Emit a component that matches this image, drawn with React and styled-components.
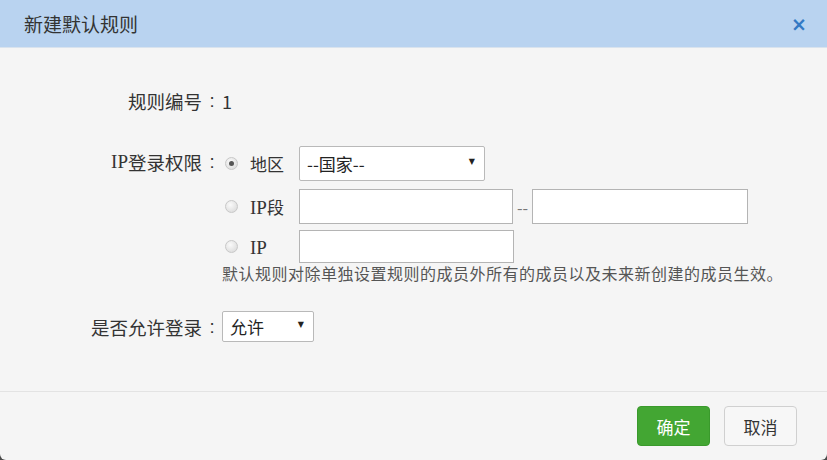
import styled, { createGlobalStyle } from 'styled-components'

const GlobalStyle = createGlobalStyle`
    html, body {
        margin: 0;
        padding: 0;
        background: #4a4a4a;
    }
    body {
        font-family: "Noto Sans CJK SC", "Liberation Sans", sans-serif;
    }
`

const Dialog = styled.div`
    width: 827px;
    height: 460px;
    display: flex;
    flex-direction: column;
    background: #f5f5f5;
    border-radius: 0 0 6px 6px;
    overflow: hidden;
    box-sizing: border-box;
`

const Header = styled.div`
    height: 48px;
    flex: none;
    display: flex;
    align-items: center;
    justify-content: space-between;
    padding: 0 20px 0 24px;
    background: #b9d3f0;
    border-bottom: 1px solid #d9e3ee;
    box-sizing: border-box;
`

const Title = styled.h3`
    margin: 0;
    font-size: 19px;
    font-weight: normal;
    color: #333;
`

const Close = styled.span`
    font-family: "DejaVu Sans", sans-serif;
    font-size: 19px;
    font-weight: bold;
    color: #3379c4;
    cursor: pointer;
`

const Body = styled.div`
    flex: 1;
    padding: 41px 0 0;
    color: #333;
    font-size: 18.5px;
`

const Row = styled.div`
    display: grid;
    grid-template-columns: 222px 1fr;
    align-items: ${p => (p.$top ? 'start' : 'center')};
    margin-bottom: ${p => p.$gap || 0}px;
`

const Label = styled.div`
    display: flex;
    justify-content: flex-end;
    align-items: center;
    line-height: ${p => p.$lh || 24}px;
    height: ${p => p.$lh || 24}px;
    white-space: nowrap;
`

const Colon = styled.span`
    display: inline-block;
    width: 20px;
    text-align: center;
    font-family: "Liberation Sans", sans-serif;
`

const Latin = styled.span`
    font-family: "Liberation Serif", serif;
    font-size: 19px;
`

const Value = styled.div`
    line-height: 24px;
    font-size: 18px;
`

const Options = styled.div`
    display: flex;
    flex-direction: column;
`

const Option = styled.label`
    display: flex;
    align-items: center;
    margin-bottom: ${p => p.$gap || 0}px;
`

const Radio = styled.span`
    width: 13px;
    height: 13px;
    margin: 0 12px 0 3px;
    border-radius: 50%;
    border: 1px solid #c8c8c8;
    box-sizing: border-box;
    background: radial-gradient(circle at 40% 35%, #fafafa, #d6d6d6);
    display: flex;
    align-items: center;
    justify-content: center;

    &::after {
        content: '';
        width: 5px;
        height: 5px;
        border-radius: 50%;
        background: ${p => (p.$checked ? '#555' : 'transparent')};
    }
`

const OptText = styled.span`
    width: 49px;
    font-size: 17px;
`

const Select = styled.div`
    width: ${p => p.$w}px;
    height: ${p => p.$h || 34}px;
    box-sizing: border-box;
    display: flex;
    align-items: center;
    justify-content: space-between;
    padding: 0 9px 0 7px;
    background: #fff;
    border: 1px solid #b9b9b9;
    border-radius: 2px;
    font-size: 17px;
    color: #222;
`

const Caret = styled.span`
    font-family: "DejaVu Sans", sans-serif;
    font-size: 8px;
    color: #222;
    margin-top: -4px;
`

const Input = styled.input`
    width: ${p => p.$w || 214}px;
    height: ${p => p.$h || 35}px;
    box-sizing: border-box;
    border: 1px solid #b4b4b4;
    background: #fff;
    padding: 0 6px;
    margin: 0;
    outline: none;
`

const Dash = styled.span`
    width: 19px;
    text-align: center;
    color: #777;
    font-size: 16px;
`

const Help = styled.div`
    margin-left: 0;
    font-size: 16px;
    line-height: 20px;
    color: #555;
    letter-spacing: 0.5px;
    white-space: nowrap;
`

const Footer = styled.div`
    height: 69px;
    flex: none;
    display: flex;
    align-items: center;
    justify-content: flex-end;
    gap: 14px;
    padding: 0 30px 0 0;
    border-top: 1px solid #e3e3e3;
    box-sizing: border-box;
`

const Button = styled.button`
    width: 73px;
    height: 40px;
    border-radius: 4px;
    font-family: "Noto Sans CJK SC", sans-serif;
    font-size: 17px;
    cursor: pointer;
    border: 1px solid ${p => (p.$primary ? '#3a9a2c' : '#d0d0d0')};
    background: ${p => (p.$primary ? '#43a633' : '#f7f7f7')};
    color: ${p => (p.$primary ? '#fff' : '#333')};
`

export default function App() {
    return (
        <>
            <GlobalStyle />
            <Dialog>
                <Header>
                    <Title>新建默认规则</Title>
                    <Close>×</Close>
                </Header>
                <Body>
                    <Row $gap={33}>
                        <Label>规则编号<Colon>:</Colon></Label>
                        <Value>1</Value>
                    </Row>
                    <Row $top $gap={28}>
                        <Label $lh={32}><Latin>IP</Latin>登录权限<Colon>:</Colon></Label>
                        <Options>
                            <Option $gap={8}>
                                <Radio $checked />
                                <OptText>地区</OptText>
                                <Select $w={186} $h={35}>
                                    <span>--国家--</span>
                                    <Caret>▼</Caret>
                                </Select>
                            </Option>
                            <Option $gap={6}>
                                <Radio />
                                <OptText><Latin>IP</Latin>段</OptText>
                                <Input $w={214} />
                                <Dash>--</Dash>
                                <Input $w={216} />
                            </Option>
                            <Option>
                                <Radio />
                                <OptText><Latin>IP</Latin></OptText>
                                <Input $w={215} $h={33} />
                            </Option>
                            <Help>默认规则对除单独设置规则的成员外所有的成员以及未来新创建的成员生效。</Help>
                        </Options>
                    </Row>
                    <Row>
                        <Label>是否允许登录<Colon>:</Colon></Label>
                        <Select $w={92} $h={31}>
                            <span>允许</span>
                            <Caret>▼</Caret>
                        </Select>
                    </Row>
                </Body>
                <Footer>
                    <Button $primary>确定</Button>
                    <Button>取消</Button>
                </Footer>
            </Dialog>
        </>
    )
}
